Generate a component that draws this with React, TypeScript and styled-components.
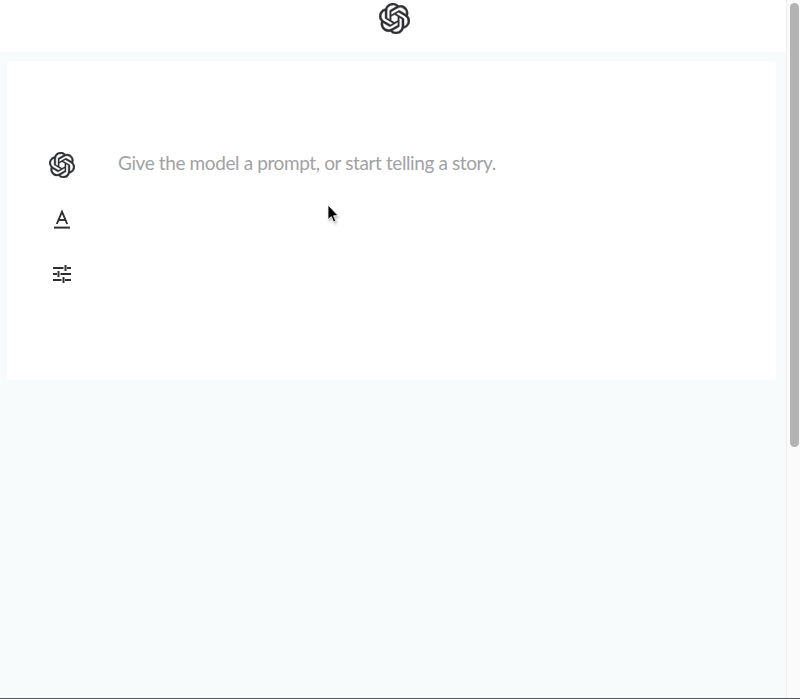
import React from "react";
import styled, { createGlobalStyle } from "styled-components";
import { SiOpenai } from "react-icons/si";

const GlobalStyle = createGlobalStyle`
  html, body {
    margin: 0;
    padding: 0;
    height: 100%;
    overflow: hidden;
    background: #ffffff;
    font-family: Lato, "Open Sans", sans-serif;
  }
`;

export default function App() {
  return (
    <>
      <GlobalStyle />
      <Page>
        <Content>
          <Header>
            <HeaderLogo size={31} />
          </Header>
          <Main>
            <Card>
              <SideTools>
                <ToolSlot>
                  <ToolLogo size={26} />
                </ToolSlot>
                <ToolSlot>
                  <svg width="24" height="24" viewBox="0 0 24 24" fill="none" stroke="#2e2f33" strokeWidth="1.9">
                    <path d="M6.8 17 L12 4.6 L17.2 17" />
                    <path d="M8.6 13 H15.4" />
                    <path d="M4 20.6 H20" strokeWidth="2" />
                  </svg>
                </ToolSlot>
                <ToolSlot>
                  <svg width="24" height="24" viewBox="0 0 24 24" fill="none" stroke="#2e2f33" strokeWidth="2">
                    <path d="M3 7 H13.5 M17 7 H21 M15.5 4 V10" />
                    <path d="M3 13 H7 M10.5 13 H21 M8.5 10 V16" />
                    <path d="M3 19 H11.5 M15 19 H21 M13.5 16 V22" />
                  </svg>
                </ToolSlot>
              </SideTools>
              <Prompt>Give the model a prompt, or start telling a story.</Prompt>
            </Card>
          </Main>
        </Content>
        <ScrollTrack>
          <ScrollThumb />
        </ScrollTrack>
        <Cursor width="14" height="22" viewBox="0 0 14 22">
          <path d="M1 1 V15.5 L4.3 12.6 L6.6 18 L8.8 17 L6.6 11.8 L11 11.6 Z" fill="#000" stroke="#fff" strokeWidth="0.8" />
        </Cursor>
      </Page>
    </>
  );
}

const Page = styled.div`
  position: relative;
  box-sizing: border-box;
  display: flex;
  width: 800px;
  height: 699px;
  border-bottom: 1px solid #55585a;
  overflow: hidden;
  background: #ffffff;
`;

const Content = styled.div`
  display: flex;
  flex-direction: column;
  flex: 1;
  min-width: 0;
`;

const Header = styled.header`
  display: flex;
  justify-content: center;
  flex: none;
  height: 52px;
  padding: 3px 0 0 2px;
  box-sizing: border-box;
  background: #ffffff;
`;

const HeaderLogo = styled(SiOpenai)`
  color: #2e2f33;
  stroke: #2e2f33;
  stroke-width: 0.35px;
`;

const ToolLogo = styled(SiOpenai)`
  color: #2e2f33;
  stroke: #2e2f33;
  stroke-width: 0.35px;
`;

const Main = styled.main`
  flex: 1;
  background: #f7fbfc;
  padding: 9px 10px 0 7px;
`;

const Card = styled.section`
  display: flex;
  height: 319px;
  box-sizing: border-box;
  padding: 91px 0 0 42px;
  background: #ffffff;
  border-radius: 3px;
`;

const SideTools = styled.div`
  display: flex;
  flex-direction: column;
  gap: 28px;
  width: 69px;
`;

const ToolSlot = styled.div`
  display: flex;
  align-items: center;
  justify-content: center;
  width: 26px;
  height: 26px;
`;

const Prompt = styled.p`
  margin: -1px 0 0;
  font-size: 19px;
  line-height: 24px;
  letter-spacing: -0.39px;
  color: #a0a2a3;
`;

const ScrollTrack = styled.div`
  flex: none;
  box-sizing: border-box;
  width: 14px;
  padding: 3px 1px 0 3px;
  background: #fbfbfb;
  border-left: 1px solid #eeeeee;
`;

const ScrollThumb = styled.div`
  height: 444px;
  background: #b3b3b3;
  border-radius: 5px;
`;

const Cursor = styled.svg`
  position: absolute;
  left: 327px;
  top: 204px;
  filter: drop-shadow(1px 2px 1px rgba(0, 0, 0, 0.25));
`;
